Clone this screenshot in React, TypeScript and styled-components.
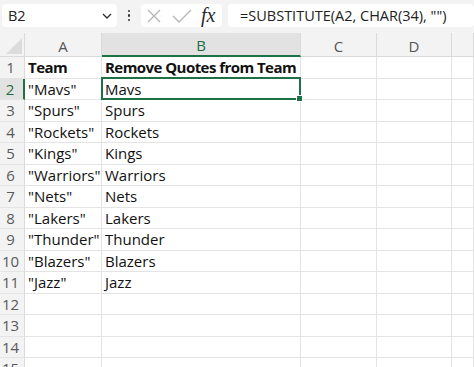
import React from "react";
import styled, { createGlobalStyle } from "styled-components";

const Global = createGlobalStyle`
  html, body { margin: 0; padding: 0; background: #ffffff; }
  body { font-family: "Open Sans", "Noto Sans", sans-serif; overflow: hidden; }
`;

const Page = styled.div`
  width: 474px;
  height: 367px;
  overflow: hidden;
  background: #ffffff;
  display: flex;
  flex-direction: column;
`;

const Toolbar = styled.div`
  height: 33px;
  flex: none;
  background: #f3f3f3;
  display: flex;
  align-items: flex-start;
  padding: 4px 0 0 2px;
  box-sizing: border-box;
`;

const Box = styled.div<{ $w?: number; $grow?: boolean }>`
  height: 23px;
  background: #ffffff;
  border-radius: 4px;
  display: flex;
  align-items: center;
  box-sizing: border-box;
  ${(p) => (p.$w ? `width: ${p.$w}px;` : "")}
  ${(p) => (p.$grow ? "flex: 1;" : "flex: none;")}
`;

const NameText = styled.span`
  font-family: "Open Sans", sans-serif;
  font-size: 14.5px;
  color: #222;
  padding-left: 6px;
  flex: 1;
`;

const Chevron = styled.svg`
  width: 10px;
  height: 8px;
  margin-right: 5px;
`;

const Dots = styled.div`
  width: 24px;
  height: 23px;
  display: flex;
  flex-direction: column;
  align-items: center;
  justify-content: center;
  gap: 2px;
  flex: none;
`;

const Dot = styled.span`
  width: 2.5px;
  height: 2.5px;
  border-radius: 50%;
  background: #333;
`;

const IconBox = styled(Box)`
  padding-left: 6px;
  margin-right: 6px;
`;

const Fx = styled.span`
  font-family: "Liberation Serif", "DejaVu Serif", serif;
  font-style: italic;
  font-size: 20px;
  color: #2a2a2a;
  margin-left: 9px;
  line-height: 1;
  margin-top: -2px;
`;

const FormulaText = styled.span`
  font-family: "Open Sans", sans-serif;
  font-size: 14.5px;
  color: #222;
  padding-left: 12px;
  white-space: nowrap;
`;

const Grid = styled.div`
  display: grid;
  grid-template-columns: 25px 77px 199px 76px 75px 1fr;
  grid-template-rows: 24px;
  grid-auto-rows: 21.5px;
`;

const CornerCell = styled.div`
  background: #f3f3f3;
  border-right: 1px solid #dadada;
  border-bottom: 1px solid #dadada;
  box-sizing: border-box;
  display: flex;
  align-items: flex-end;
  justify-content: flex-end;
  padding: 0 2px 2px 0;
`;

const ColHead = styled.div<{ $sel?: boolean }>`
  background: ${(p) => (p.$sel ? "#e2e2e2" : "#f3f3f3")};
  color: ${(p) => (p.$sel ? "#1e6e42" : "#555")};
  border-right: 1px solid #dadada;
  border-bottom: ${(p) => (p.$sel ? "2px solid #1e7145" : "1px solid #dadada")};
  box-sizing: border-box;
  font-family: "Open Sans", sans-serif;
  font-size: 15px;
  display: flex;
  align-items: center;
  justify-content: center;
  padding-top: 2px;
`;

const RowHead = styled.div<{ $sel?: boolean }>`
  background: ${(p) => (p.$sel ? "#e2e2e2" : "#f3f3f3")};
  color: ${(p) => (p.$sel ? "#1e6e42" : "#5a5a5a")};
  border-right: ${(p) => (p.$sel ? "2px solid #1e7145" : "1px solid #dadada")};
  border-bottom: 1px solid #e4e4e4;
  box-sizing: border-box;
  font-family: "Open Sans", sans-serif;
  font-size: 15px;
  display: flex;
  align-items: center;
  justify-content: center;
  padding-right: 3px;
`;

const Cell = styled.div<{ $bold?: boolean }>`
  border-right: 1px solid #e4e4e4;
  border-bottom: 1px solid #e4e4e4;
  box-sizing: border-box;
  font-family: "Open Sans", sans-serif;
  font-size: 15px;
  font-weight: ${(p) => (p.$bold ? 700 : 400)};
  letter-spacing: ${(p) => (p.$bold ? "-0.55px" : "0")};
  color: #111;
  display: flex;
  align-items: center;
  padding-left: 3px;
  white-space: nowrap;
  position: relative;
  overflow: visible;
`;

const Selection = styled.div`
  position: absolute;
  left: -1px;
  top: -2px;
  right: -1px;
  bottom: -1px;
  border: 2px solid #1e7145;
  pointer-events: none;
  z-index: 2;
`;

const Handle = styled.div`
  position: absolute;
  right: -4px;
  bottom: -4px;
  width: 5px;
  height: 5px;
  background: #1e7145;
  border: 1px solid #fff;
`;

const CellText = styled.span`
  position: relative;
  z-index: 1;
`;

const rows: [string, string][] = [
  ["Team", "Remove Quotes from Team"],
  ['"Mavs"', "Mavs"],
  ['"Spurs"', "Spurs"],
  ['"Rockets"', "Rockets"],
  ['"Kings"', "Kings"],
  ['"Warriors"', "Warriors"],
  ['"Nets"', "Nets"],
  ['"Lakers"', "Lakers"],
  ['"Thunder"', "Thunder"],
  ['"Blazers"', "Blazers"],
  ['"Jazz"', "Jazz"],
  ["", ""],
  ["", ""],
  ["", ""],
  ["", ""],
];

export default function App() {
  return (
    <Page>
      <Global />
      <Toolbar>
        <Box $w={115}>
          <NameText>B2</NameText>
          <Chevron viewBox="0 0 10 8">
            <path d="M1 2 L5 6 L9 2" fill="none" stroke="#333" strokeWidth="1.4" />
          </Chevron>
        </Box>
        <Dots>
          <Dot />
          <Dot />
          <Dot />
        </Dots>
        <IconBox $w={81}>
          <svg width="14" height="14" viewBox="0 0 14 14">
            <path d="M1 1 L13 13 M13 1 L1 13" stroke="#b4b4b4" strokeWidth="1.3" fill="none" />
          </svg>
          <svg width="20" height="14" viewBox="0 0 20 14" style={{ marginLeft: 11 }}>
            <path d="M1 7 L7 13 L19 1" stroke="#b4b4b4" strokeWidth="1.3" fill="none" />
          </svg>
          <Fx>fx</Fx>
        </IconBox>
        <Box $grow>
          <FormulaText>=SUBSTITUTE(A2, CHAR(34), "")</FormulaText>
        </Box>
      </Toolbar>
      <Grid>
        <CornerCell>
          <svg width="16" height="16" viewBox="0 0 16 16">
            <path d="M16 0 L16 16 L0 16 Z" fill="#dcdcdc" />
          </svg>
        </CornerCell>
        {["A", "B", "C", "D", "E"].map((c) => (
          <ColHead key={c} $sel={c === "B"}>
            {c === "E" ? "" : c}
          </ColHead>
        ))}
        {rows.map(([a, b], i) => (
          <React.Fragment key={i}>
            <RowHead $sel={i === 1}>{i + 1}</RowHead>
            <Cell $bold={i === 0}>
              <CellText>{a}</CellText>
            </Cell>
            <Cell $bold={i === 0}>
              <CellText>{b}</CellText>
              {i === 1 && (
                <Selection>
                  <Handle />
                </Selection>
              )}
            </Cell>
            <Cell />
            <Cell />
            <Cell />
          </React.Fragment>
        ))}
      </Grid>
    </Page>
  );
}
